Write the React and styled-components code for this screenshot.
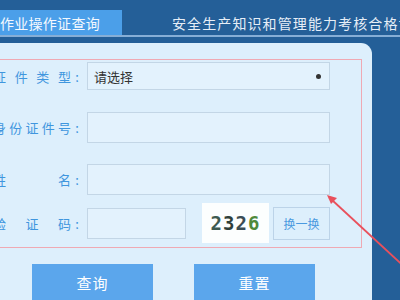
import React from 'react';
import styled, {createGlobalStyle} from 'styled-components';

const GlobalStyle = createGlobalStyle`
  html, body {
    margin: 0;
    padding: 0;
    width: 400px;
    height: 300px;
    overflow: hidden;
    background: #245f98;
    font-family: "Noto Sans CJK SC", "Liberation Sans", sans-serif;
  }
`;

const Page = styled.div`
  position: relative;
  width: 400px;
  height: 300px;
  overflow: hidden;
`;

const TabBar = styled.div`
  display: flex;
  align-items: flex-end;
  height: 35px;
  border-bottom: 2px solid #86aed6;
`;

const Tab = styled.div`
  display: flex;
  align-items: center;
  justify-content: ${({active}) => (active ? 'flex-end' : 'flex-start')};
  height: 25px;
  width: ${({width}) => width}px;
  padding: ${({active}) => (active ? '0 22px 0 0' : '0 0 0 50px')};
  box-sizing: border-box;
  overflow: hidden;
  white-space: nowrap;
  flex-shrink: 0;
  background: ${({active}) => (active ? '#4b9fe9' : 'transparent')};
  color: ${({active}) => (active ? '#f4f9ff' : '#e6eef7')};
  font-size: 14px;
  letter-spacing: ${({active}) => (active ? '0.3px' : '1.1px')};
`;

const Panel = styled.div`
  margin-top: 6px;
  width: 372px;
  height: 270px;
  background: #ddeffc;
  border-top-right-radius: 11px;
  padding-top: 16px;
  box-sizing: border-box;
`;

const FormBox = styled.div`
  margin-left: -20px;
  width: 382px;
  box-sizing: border-box;
  border: 1.5px solid #efa9b3;
  padding: 1px 0 4px 12px;
  display: flex;
  flex-direction: column;
`;

const Row = styled.div`
  display: flex;
  align-items: center;
  height: ${({h}) => h}px;
  margin-top: ${({mt}) => mt || 0}px;
`;

const Label = styled.div`
  display: flex;
  justify-content: space-between;
  width: 78px;
  color: #3f96de;
  font-size: 13px;
`;

const Colon = styled.span`
  width: 12px;
  margin-right: 4px;
  color: #3f96de;
  font-size: 13px;
  text-align: center;
`;

const Field = styled.div`
  position: relative;
  display: flex;
  align-items: center;
  width: ${({w}) => w}px;
  height: ${({h}) => h || 30}px;
  box-sizing: border-box;
  border: 1px solid #c3d6e6;
  background: #e3f2fd;
  padding-left: 6px;
  font-size: 13px;
  color: #333;
`;

const Caret = styled.span`
  margin-left: auto;
  margin-right: 8px;
  width: 5px;
  height: 5px;
  border-radius: 50%;
  background: #333;
`;

const Captcha = styled.div`
  display: flex;
  align-items: center;
  justify-content: center;
  width: 67px;
  height: 40px;
  margin-left: 16px;
  background: #fcfefe;
  font-family: "DejaVu Sans Mono", monospace;
  font-weight: bold;
  font-size: 19px;
  letter-spacing: 1px;
  color: #3c4f48;
`;

const Digit = styled.span`
  color: ${({c}) => c};
`;

const SwapButton = styled.div`
  display: flex;
  align-items: center;
  justify-content: center;
  width: 57px;
  height: 33px;
  margin-left: 4px;
  box-sizing: border-box;
  border: 1px solid #bcd3e8;
  color: #4a9ae0;
  font-size: 12px;
`;

const Actions = styled.div`
  display: flex;
  gap: 41px;
  margin: 16px 0 0 32px;
`;

const Button = styled.div`
  display: flex;
  align-items: center;
  justify-content: center;
  width: 121px;
  height: 36px;
  background: #5ba6ec;
  color: #fff;
  font-size: 15px;
  letter-spacing: 1px;
`;

const Arrow = styled.svg`
  position: absolute;
  left: 0;
  top: 0;
  pointer-events: none;
`;

function SpacedLabel({text}) {
  return (
    <>
      <Label>
        {text.split('').map((ch, i) => (
          <span key={i}>{ch}</span>
        ))}
      </Label>
      <Colon>:</Colon>
    </>
  );
}

export default function App() {
  return (
    <Page>
      <GlobalStyle />
      <TabBar>
        <Tab active width={122}>特种作业操作证查询</Tab>
        <Tab width={300}>安全生产知识和管理能力考核合格证查询</Tab>
      </TabBar>
      <Panel>
        <FormBox>
          <Row h={30}>
            <SpacedLabel text="证件类型" />
            <Field w={243} h={28}>
              请选择
              <Caret />
            </Field>
          </Row>
          <Row h={31} mt={21}>
            <SpacedLabel text="身份证件号" />
            <Field w={243} h={31} />
          </Row>
          <Row h={31} mt={21}>
            <SpacedLabel text="姓名" />
            <Field w={243} h={31} />
          </Row>
          <Row h={40} mt={8}>
            <SpacedLabel text="验证码" />
            <Field w={99} h={31} />
            <Captcha>
              <Digit c="#3e5a50">2</Digit>
              <Digit c="#2f3f3a">3</Digit>
              <Digit c="#3b4d55">2</Digit>
              <Digit c="#4f8a3c">6</Digit>
            </Captcha>
            <SwapButton>换一换</SwapButton>
          </Row>
        </FormBox>
        <Actions>
          <Button>查询</Button>
          <Button>重置</Button>
        </Actions>
      </Panel>
      <Arrow width="400" height="300" viewBox="0 0 400 300">
        <line x1="332" y1="200" x2="410" y2="272" stroke="#e9505c" strokeWidth="1.8" />
        <polygon points="327,195 337,198 331,204" fill="#e9505c" />
      </Arrow>
    </Page>
  );
}
